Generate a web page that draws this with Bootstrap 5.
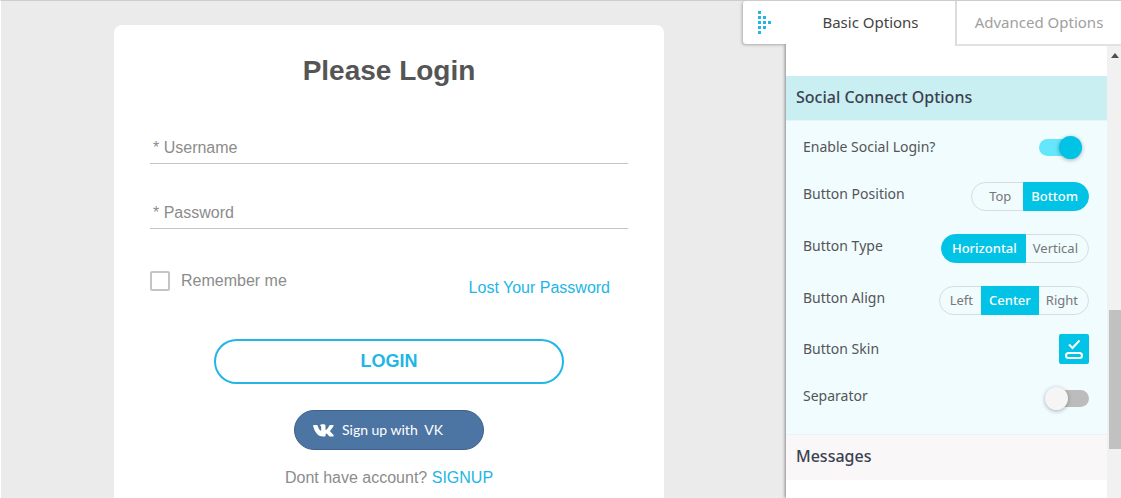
<!DOCTYPE html>
<html lang="en">
<head>
<meta charset="utf-8">
<meta name="viewport" content="width=device-width, initial-scale=1">
<title>Login form editor</title>
<link href="https://cdn.jsdelivr.net/npm/bootstrap@5.3.0/dist/css/bootstrap.min.css" rel="stylesheet">
<style>
:root { --accent: #22b6e6; --cyan: #00c3e6; }
body { background: #ebebeb; font-family: "Liberation Sans", Arial, sans-serif; font-size: 16px; line-height: 24px; color: #8c8c8c; border-top: 1px solid #ccc; border-left: 1px solid #fff; }
a { text-decoration: none; color: var(--accent); }

/* Form preview */
.preview { padding: 24px 9px 0 0; }
.login-card { width: 550px; max-width: 100%; background: #fff; border-radius: 8px; padding: 28px 36px 24px; }
.login-card h1 { font-size: 28px; line-height: 36px; color: #555; margin-bottom: 42px; }
.line-input { border: 0; border-bottom: 1px solid #c4c4c4; border-radius: 0; background: none; padding: 6px 3px 4px; height: 33px; font-size: 16px; color: #8c8c8c; margin-bottom: 32px; box-shadow: none; }
.line-input::placeholder { color: #8c8c8c; }
.remember { gap: 11px; padding-top: 8px; }
.square-check { appearance: none; width: 20px; height: 20px; border: 2px solid #c4c4c4; border-radius: 2px; margin: 0; background: #fff; }
.lost { padding: 15px 18px 0 0; }
.login-btn { width: 350px; max-width: 100%; height: 45px; margin-top: 39px; border: 2px solid var(--accent); border-radius: 24px; color: var(--accent); background: #fff; font-size: 18px; line-height: 24px; font-weight: 700; padding: 0 0 2px; }
.vk-btn { width: 190px; height: 40px; margin: 26px 0 16px; border: 1px solid #3f628b; border-radius: 20px; background: #4d75a3; color: #fff; font: 14px/20px Lato, sans-serif; padding: 0 0 0 18px; gap: 8px; white-space: pre; }

/* Options panel */
.panel { width: 335px; background: #fff; font-family: "Noto Sans", sans-serif; font-size: 14px; line-height: 20px; color: #555; box-shadow: -1px 0 3px #888; }
.handle { left: -43px; top: 0; width: 44px; height: 43px; background: #fff; border: 0; border-radius: 3px 0 0 3px; box-shadow: -1px 1px 3px #aaa; clip-path: inset(0 1px -6px -6px); padding: 0 0 0 15px; }
.tabs { height: 45px; font-size: 15px; }
.tabs button { border: 0; background: #fff; color: #444; padding: 0 0 3px; }
.tabs .tab-basic { width: 169px; }
.tabs .tab-advanced { color: #a0a0a0; border-left: 2px solid #dcdcdc; border-bottom: 2px solid #e2e2e2; padding-bottom: 2px; }
.section-head { font-size: 16px; line-height: 24px; font-weight: 500; color: #3c3f50; padding: 9px 10px 11px; margin: 0; border-bottom: 1px solid #e6f6f8; }
.section-open { background: #c9eff2; margin-top: 30px; }
.section-closed { background: #f9f7f8; border: 0; border-top: 1px solid #eaf3f6; padding-top: 9px; padding-bottom: 12px; }
.options { background: #f0fcff; padding: 3px 18px 10px 17px; }
.opt { height: 46px; }
.opt-group { height: 52px; }
.opt-label { margin-bottom: 5px; }
.seg .btn { height: 29px; font-size: 13px; line-height: 19px; padding: 4px 7px; border: 1px solid #d9dcde; color: #777; }
.seg .btn:first-of-type { border-radius: 15px 0 0 15px; padding-left: 10px; padding-right: 8px; }
.seg .btn:last-of-type { border-radius: 0 15px 15px 0; padding-left: 7px; padding-right: 10px; }
.seg .btn-check:checked + .btn { background: var(--cyan); border-color: var(--cyan); color: #fff; font-weight: 500; }
.seg-wide .btn:first-of-type { padding-left: 17px; padding-right: 12px; }
.slide { appearance: none; position: relative; width: 36px; height: 17px; margin: 0; border-radius: 9px; background: #bcbcbc; }
.slide::before { content: ""; position: absolute; left: -8px; top: -3px; width: 23px; height: 23px; border-radius: 50%; background: #f5f5f5; box-shadow: 0 1px 4px rgba(0,0,0,.3); }
.slide:checked { background: #66e6fa; margin-right: 14px; }
.slide:checked::before { left: 20px; background: var(--cyan); }
.skin-btn { width: 30px; height: 30px; border: 0; border-radius: 2px; background: var(--cyan); padding: 0; }
.track { width: 14px; background: #f1f1f1; padding: 7px 0 0 2px; }
.track svg { margin-left: 2px; }
.thumb { height: 139px; background: #c1c1c1; margin-top: 252px; }
</style>
</head>
<body class="d-flex vh-100 overflow-hidden">
<main class="preview flex-grow-1 d-flex flex-column align-items-center overflow-hidden">
  <form class="login-card flex-shrink-0 d-flex flex-column align-items-center">
    <h1 class="fw-bold">Please Login</h1>
    <input class="form-control line-input" type="text" placeholder="* Username" aria-label="Username">
    <input class="form-control line-input" type="password" placeholder="* Password" aria-label="Password">
    <div class="w-100 d-flex justify-content-between align-items-start">
      <div class="remember d-flex align-items-center">
        <input class="square-check" type="checkbox" id="remember">
        <label for="remember">Remember me</label>
      </div>
      <a class="lost" href="#">Lost Your Password</a>
    </div>
    <button class="login-btn" type="submit">LOGIN</button>
    <button class="vk-btn d-flex align-items-center" type="button"><svg width="21" height="13" viewBox="0 0 21 13" fill="#fff" aria-hidden="true"><path d="M10.200 12.500C4.400 12.500 1.600 7.500.1 1.700Q0 .9.800.9H3.700Q4.400.9 4.600 1.500C5.500 4.200 6.500 6.200 7.500 6.700Q8.200 6.900 8.200 5.400V3.100Q8.100 1.800 6.900 1.500Q7.400.4 9.500.3H11.200Q12.500.3 12.500 1.800V5.200Q12.600 6.500 13.400 5.700C14.700 4.500 15.700 2.600 16.300 1.400Q16.600.9 17.200.9H20Q20.900.9 20.600 1.700C20 3.300 18.300 5.200 17.300 6.500Q16.800 7.200 17.400 7.800C18.500 8.900 20.200 10.500 20.700 11.500Q21 12.400 20 12.500H17.200Q16.500 12.500 15.900 11.900L14.200 10.100Q12.700 8.800 12.600 10.600V11.400Q12.600 12.500 11.500 12.500Z"/></svg>Sign up with  VK</button>
    <p class="m-0">Dont have account? <a href="#">SIGNUP</a></p>
  </form>
</main>

<aside class="panel position-relative flex-shrink-0 d-flex flex-column">
  <button class="handle position-absolute d-flex align-items-center" type="button" aria-label="Collapse panel">
    <svg width="13" height="23" viewBox="0 0 13 23" fill="#22b6e6"><path d="M0 0h3v3H0zM0 5h3v3H0zM5 5h3v3H5zM0 10h3v3H0zM5 10h3v3H5zM10 10h3v3h-3zM0 15h3v3H0zM5 15h3v3H5zM0 20h3v3H0z"/></svg>
  </button>
  <nav class="tabs d-flex flex-shrink-0">
    <button class="tab-basic" type="button">Basic Options</button>
    <button class="tab-advanced flex-grow-1" type="button">Advanced Options</button>
  </nav>
  <div class="d-flex flex-grow-1 overflow-hidden">
    <div class="flex-grow-1">
      <h2 class="section-head section-open">Social Connect Options</h2>
      <div class="options">
        <div class="opt d-flex justify-content-between align-items-center">
          <label for="social">Enable Social Login?</label>
          <input class="slide" type="checkbox" role="switch" id="social" checked>
        </div>
        <div class="opt opt-group d-flex justify-content-between align-items-center">
          <span class="opt-label" id="l-pos">Button Position</span>
          <div class="seg seg-wide btn-group" role="group" aria-labelledby="l-pos">
            <input class="btn-check" type="radio" name="pos" id="top"><label class="btn" for="top">Top</label>
            <input class="btn-check" type="radio" name="pos" id="bottom" checked><label class="btn" for="bottom">Bottom</label>
          </div>
        </div>
        <div class="opt opt-group d-flex justify-content-between align-items-center">
          <span class="opt-label" id="l-type">Button Type</span>
          <div class="seg btn-group" role="group" aria-labelledby="l-type">
            <input class="btn-check" type="radio" name="type" id="horizontal" checked><label class="btn" for="horizontal">Horizontal</label>
            <input class="btn-check" type="radio" name="type" id="vertical"><label class="btn" for="vertical">Vertical</label>
          </div>
        </div>
        <div class="opt opt-group d-flex justify-content-between align-items-center">
          <span class="opt-label" id="l-align">Button Align</span>
          <div class="seg btn-group" role="group" aria-labelledby="l-align">
            <input class="btn-check" type="radio" name="align" id="left"><label class="btn" for="left">Left</label>
            <input class="btn-check" type="radio" name="align" id="center" checked><label class="btn" for="center">Center</label>
            <input class="btn-check" type="radio" name="align" id="right"><label class="btn" for="right">Right</label>
          </div>
        </div>
        <div class="opt d-flex justify-content-between align-items-center">
          <span>Button Skin</span>
          <button class="skin-btn" type="button" aria-label="Choose button skin"><svg class="d-block" width="30" height="30" viewBox="0 0 30 30" fill="none" stroke="#fff" stroke-width="2"><path d="M10 10.500l3.500 3.500L20.500 6.500"/><rect x="7" y="19" width="16" height="5" rx="2.500"/></svg></button>
        </div>
        <div class="opt opt-group d-flex justify-content-between align-items-center">
          <label class="opt-label" for="separator">Separator</label>
          <input class="slide" type="checkbox" role="switch" id="separator">
        </div>
      </div>
      <h2 class="section-head section-closed">Messages</h2>
    </div>
    <div class="track flex-shrink-0 d-flex flex-column" aria-hidden="true">
      <svg class="flex-shrink-0" width="8" height="5" viewBox="0 0 8 5"><path d="M0 5L4 0L8 5Z" fill="#505050"/></svg>
      <div class="thumb"></div>
    </div>
  </div>
</aside>
<script src="https://cdn.jsdelivr.net/npm/bootstrap@5.3.0/dist/js/bootstrap.bundle.min.js"></script>
</body>
</html>
